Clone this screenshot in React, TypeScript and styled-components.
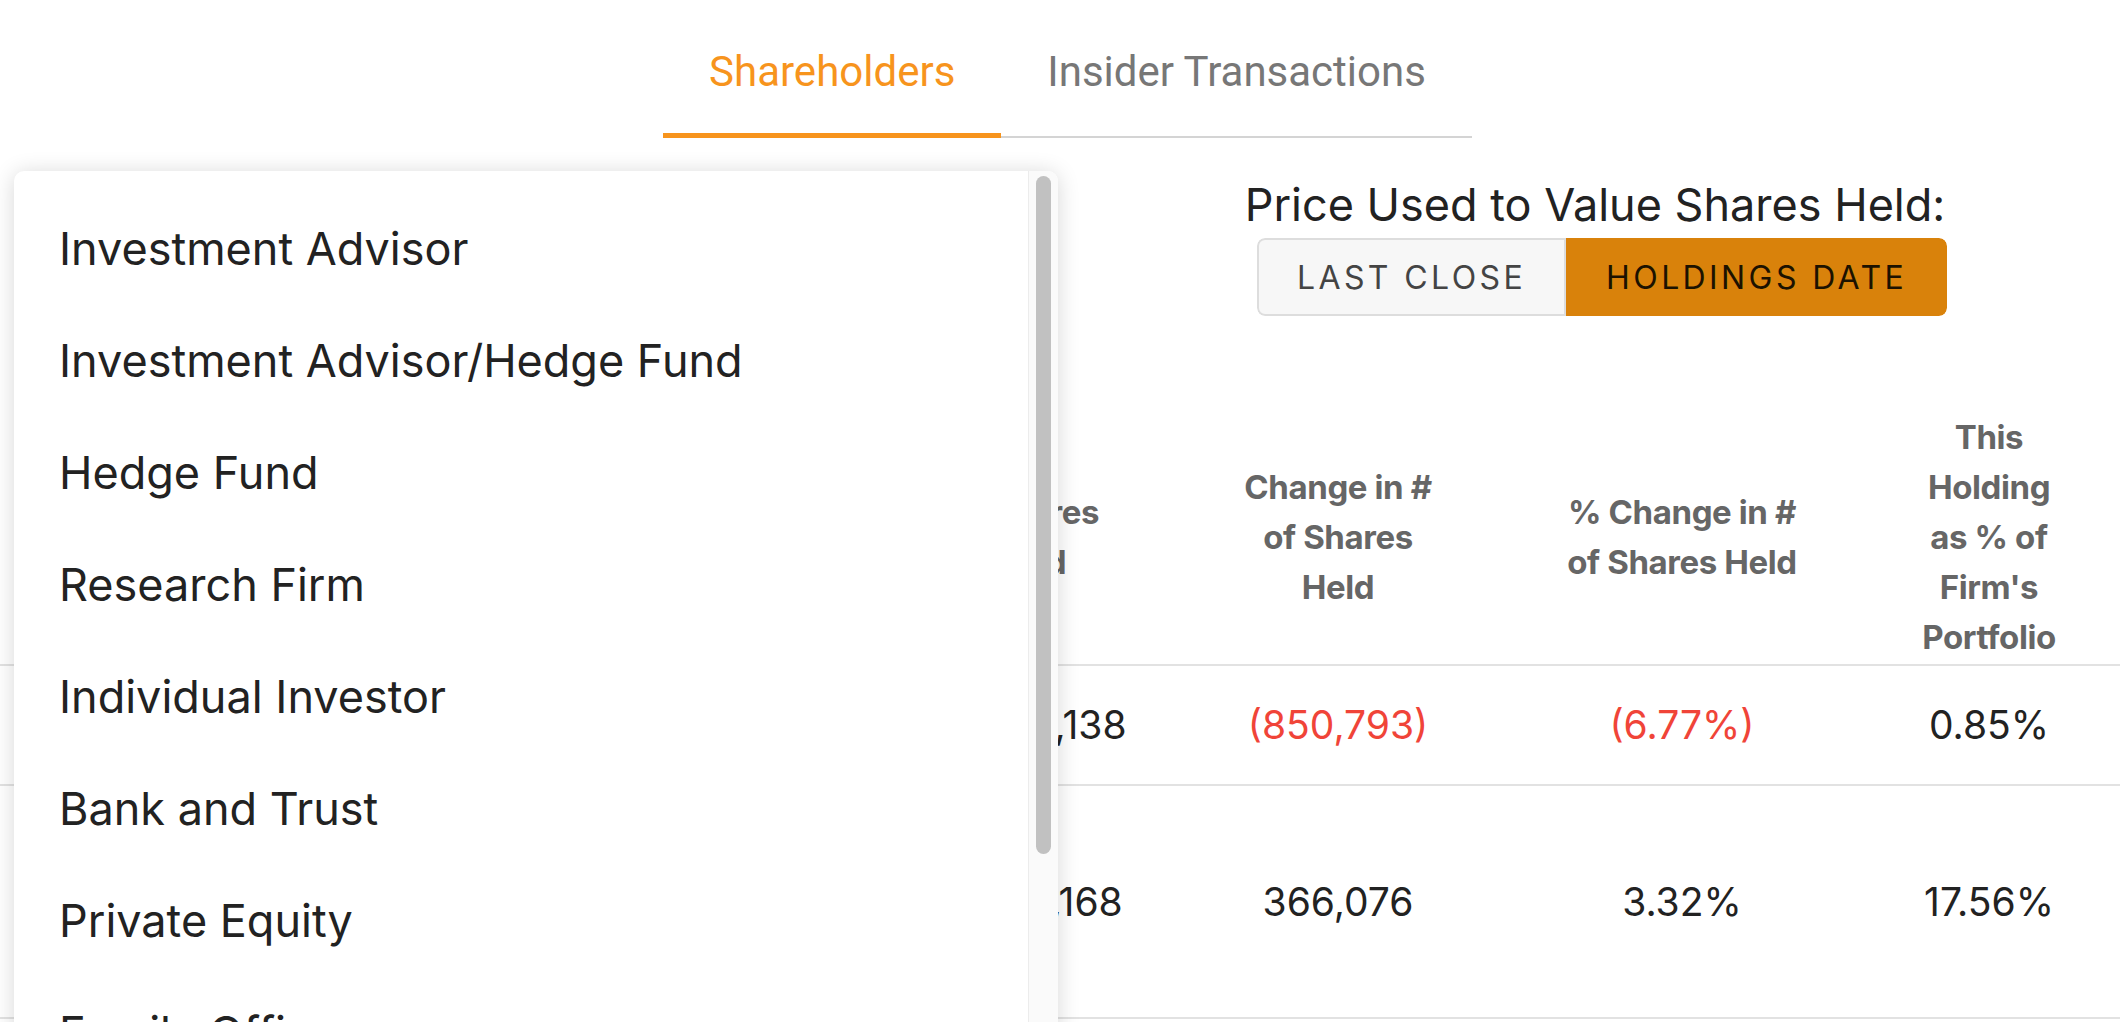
import styled, { createGlobalStyle } from 'styled-components';

const GlobalStyle = createGlobalStyle`
  html, body {
    margin: 0;
    padding: 0;
    overflow: hidden;
    background: #fff;
  }
  body {
    font-family: Inter, "Noto Sans", sans-serif;
    color: #222;
  }
`;

const Page = styled.div`
  position: relative;
  width: 2120px;
  height: 1022px;
  overflow: hidden;
`;

const TabBar = styled.nav`
  display: flex;
  justify-content: center;
  padding: 48px 0 0 15px;
`;

const Tab = styled.button<{ $active?: boolean }>`
  font-family: Roboto, "Liberation Sans", sans-serif;
  font-size: 42px;
  line-height: 48px;
  padding: 0 46px 42px;
  border: none;
  background: none;
  color: ${p => (p.$active ? '#f7941d' : '#777777')};
  box-shadow: ${p => (p.$active ? 'inset 0 -5px 0 #f7941d' : 'inset 0 -2px 0 #d4d4d4')};
`;

const Controls = styled.section`
  display: grid;
  grid-template-columns: 1fr 1fr;
  margin-top: 40px;
`;

const PriceBlock = styled.div`
  grid-column: 2;
  display: flex;
  flex-direction: column;
  align-items: center;
  gap: 7px;
  padding-left: 10px;
`;

const PriceLabel = styled.div`
  font-size: 45px;
  line-height: 53px;
  color: #222;
`;

const Toggle = styled.div`
  display: flex;
  height: 78px;
  border-radius: 8px;
  overflow: hidden;
  margin-left: 14px;
`;

const ToggleButton = styled.button<{ $active?: boolean }>`
  font-family: Inter, sans-serif;
  font-size: 32px;
  letter-spacing: 3.4px;
  padding: 0 38px;
  border: 2px solid ${p => (p.$active ? '#d9820b' : '#dddddd')};
  border-radius: ${p => (p.$active ? '0 8px 8px 0' : '8px 0 0 8px')};
  background: ${p => (p.$active ? '#d9820b' : '#f7f7f7')};
  color: ${p => (p.$active ? '#1c1200' : '#444444')};
`;

const Table = styled.div`
  margin-top: 76px;
`;

const cols = '890px 280px 336px 352px 262px';

const HeaderRow = styled.div`
  display: grid;
  grid-template-columns: ${cols};
  align-items: center;
  border-bottom: 2px solid #e2e2e2;
`;

const HeaderCell = styled.div`
  padding: 20px 12px 2px;
  font-size: 33px;
  font-weight: 700;
  line-height: 50px;
  color: #666666;
  text-align: center;
  letter-spacing: -0.4px;
`;

const DataRow = styled.div<{ $height: number }>`
  display: grid;
  grid-template-columns: ${cols};
  align-items: center;
  min-height: ${p => p.$height}px;
  border-bottom: 2px solid #e2e2e2;
`;

const Cell = styled.div<{ $negative?: boolean }>`
  padding: 0 8px;
  font-size: 39px;
  line-height: 46px;
  text-align: center;
  color: ${p => (p.$negative ? '#f04438' : '#222222')};
`;

// holder name column sits under the open menu
const NameCell = styled.div`
  padding: 0 60px;
`;

const Menu = styled.div`
  position: absolute;
  left: 14px;
  top: 171px;
  width: 1044px;
  height: 900px;
  display: flex;
  background: #fff;
  border-radius: 10px;
  box-shadow: 0 2px 22px rgba(0, 0, 0, 0.16);
  overflow: hidden;
`;

const MenuList = styled.ul`
  flex: 1;
  list-style: none;
  margin: 0;
  padding: 22px 0 0;
`;

const MenuItem = styled.li`
  height: 112px;
  line-height: 112px;
  padding-left: 45px;
  font-size: 45px;
  color: #222;
  white-space: nowrap;
`;

const ScrollTrack = styled.div`
  width: 30px;
  padding: 5px 0 0 7px;
  box-sizing: border-box;
  background: #fafafa;
  border-left: 1px solid #ececec;
`;

const ScrollThumb = styled.div`
  width: 15px;
  height: 678px;
  border-radius: 8px;
  background: #c1c1c1;
`;

const menuItems = [
  'Investment Advisor',
  'Investment Advisor/Hedge Fund',
  'Hedge Fund',
  'Research Firm',
  'Individual Investor',
  'Bank and Trust',
  'Private Equity',
  'Family Office',
  'Pension Fund',
];

const rows = [
  { id: 1, shares: '12,566,138', change: '(850,793)', pct: '(6.77%)', weight: '0.85%', neg: true, height: 118 },
  { id: 2, shares: '11,393,168', change: '366,076', pct: '3.32%', weight: '17.56%', neg: false, height: 231 },
];

export default function App() {
  return (
    <Page>
      <GlobalStyle />
      <TabBar>
        <Tab $active>Shareholders</Tab>
        <Tab>Insider Transactions</Tab>
      </TabBar>

      <Controls>
        <PriceBlock>
          <PriceLabel>Price Used to Value Shares Held:</PriceLabel>
          <Toggle>
            <ToggleButton>LAST CLOSE</ToggleButton>
            <ToggleButton $active>HOLDINGS DATE</ToggleButton>
          </Toggle>
        </PriceBlock>
      </Controls>

      <Table>
        <HeaderRow>
          <HeaderCell />
          <HeaderCell>
            # Shares
            <br />
            Held
          </HeaderCell>
          <HeaderCell>
            Change in #
            <br />
            of Shares
            <br />
            Held
          </HeaderCell>
          <HeaderCell>
            % Change in #
            <br />
            of Shares Held
          </HeaderCell>
          <HeaderCell>
            This
            <br />
            Holding
            <br />
            as % of
            <br />
            Firm's
            <br />
            Portfolio
          </HeaderCell>
        </HeaderRow>
        {rows.map(r => (
          <DataRow key={r.id} $height={r.height}>
            <NameCell />
            <Cell>{r.shares}</Cell>
            <Cell $negative={r.neg}>{r.change}</Cell>
            <Cell $negative={r.neg}>{r.pct}</Cell>
            <Cell>{r.weight}</Cell>
          </DataRow>
        ))}
      </Table>

      <Menu>
        <MenuList>
          {menuItems.map(item => (
            <MenuItem key={item}>{item}</MenuItem>
          ))}
        </MenuList>
        <ScrollTrack>
          <ScrollThumb />
        </ScrollTrack>
      </Menu>
    </Page>
  );
}
